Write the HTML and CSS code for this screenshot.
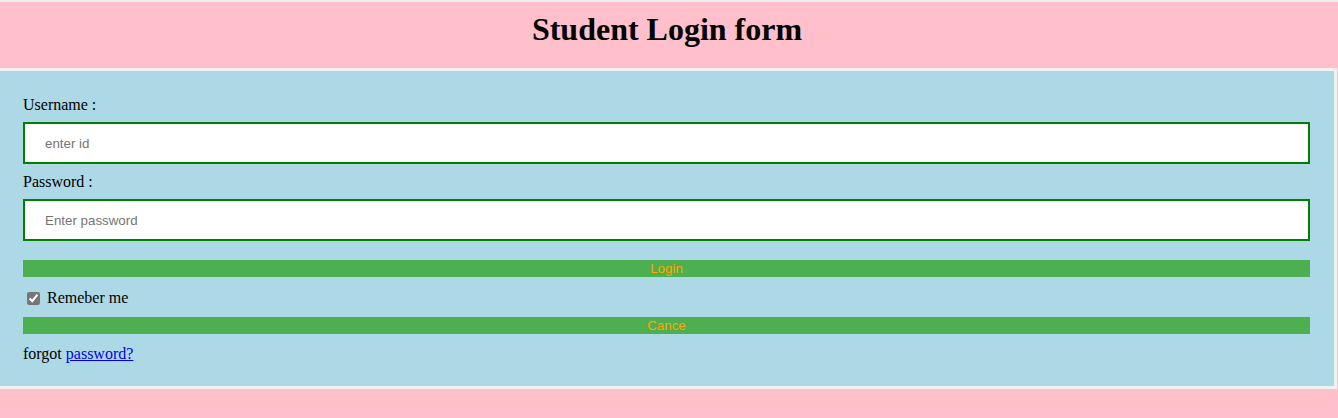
FILE: index.html
```html
<!DOCTYPE html>
<html lang="en">
<head>
<meta charset="utf-8">
<title>Student Login form</title>
<link rel="stylesheet" href="styles.css">
</head>
<body>
<div class="topline"></div>
<header class="header">
  <h1 class="title">Student Login form</h1>
</header>
<form class="container">
  <label class="label" for="uname">Username :</label>
  <input class="field" id="uname" type="text" placeholder="enter id">
  <label class="label" for="pwd">Password :</label>
  <input class="field" id="pwd" type="password" placeholder="Enter password">
  <button class="btn btn-login" type="button">Login</button>
  <div class="remember">
    <input class="check" type="checkbox" checked>
    <span>Remeber me</span>
  </div>
  <button class="btn btn-cancel" type="button">Cance</button>
  <div class="forgot">forgot <a href="#">password?</a></div>
</form>
</body>
</html>
```
FILE: styles.css
```css
html, body {
  margin: 0;
  padding: 0;
}
body {
  background: #ffc0cb;
  font-family: "Liberation Serif", "Times New Roman", serif;
  font-size: 16px;
  color: #000;
  width: 1338px;
  height: 418px;
  overflow: hidden;
}
.topline {
  height: 2px;
  background: #eeeeee;
}
.header {
  width: 1334px;
  height: 66px;
  box-sizing: border-box;
  padding-top: 8.5px;
  text-align: center;
}
.title {
  margin: 0;
  font-size: 32px;
  font-weight: bold;
  line-height: 36px;
}
.container {
  display: flex;
  flex-direction: column;
  align-items: stretch;
  width: 1337px;
  box-sizing: border-box;
  background: #add8e6;
  border: 3px solid #f1f1f1;
  border-left: 0;
  padding: 24px 24px 23px 23px;
  margin: 0;
}
.label {
  display: block;
  height: 19px;
  line-height: 19px;
}
.field {
  display: block;
  box-sizing: border-box;
  height: 42px;
  margin: 8px 0;
  padding: 0 20px;
  border: 2px solid #008000;
  background: #fff;
  font-family: "Liberation Sans", Arial, sans-serif;
  font-size: 13.33px;
  color: #000;
  outline: none;
}
.field::placeholder {
  color: #757575;
}
.btn {
  display: block;
  height: 17px;
  padding: 0;
  border: 0;
  background: #4caf50;
  color: #ffa500;
  font-family: "Liberation Sans", Arial, sans-serif;
  font-size: 13.33px;
  line-height: 17px;
  text-align: center;
}
.btn-login {
  margin-top: 11px;
}
.remember {
  display: flex;
  align-items: center;
  height: 18px;
  margin-top: 12px;
  line-height: 18px;
}
.check {
  width: 13px;
  height: 13px;
  margin: 0 7px 0 4px;
  accent-color: #767676;
}
.btn-cancel {
  margin-top: 10px;
}
.forgot {
  height: 18px;
  line-height: 18px;
  margin-top: 11px;
}
.forgot a {
  color: #0000ee;
  text-decoration: underline;
}
```
